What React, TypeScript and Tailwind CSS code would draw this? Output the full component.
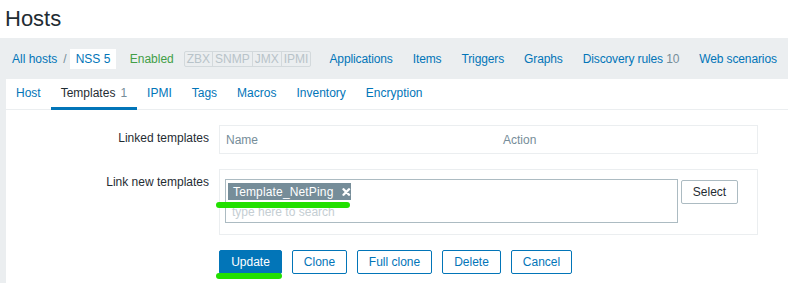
import React from "react";

const navLinks = ["Applications", "Items", "Triggers", "Graphs"];
const tabs = ["Host", "Templates", "IPMI", "Tags", "Macros", "Inventory", "Encryption"];

export default function App() {
  return (
    <div
      className="relative h-[283px] w-[788px] overflow-hidden bg-white text-[12px] leading-[14px] text-[#1f2c33]"
      style={{ fontFamily: '"Liberation Sans", Arial, sans-serif' }}
    >
      {/* title */}
      <header className="flex h-[38px] items-center px-[5px]">
        <h1 className="text-[22px] leading-[24px] font-normal">Hosts</h1>
      </header>

      {/* host navigation */}
      <div className="flex h-[41px] items-center bg-[#ebeef0] pl-[12px] whitespace-nowrap">
        <a className="shrink-0 text-[#0275b8]">All hosts</a>
        <span className="ml-[6px] text-[#768d99]">/</span>
        <span className="ml-[3px] flex h-[20px] w-[46px] shrink-0 items-center bg-white pl-[6px] text-[#0275b8]">NSS 5</span>
        <span className="ml-[14px] text-[#429e47]">Enabled</span>
        <div className="ml-[10px] flex h-[16px] shrink-0 rounded-[2px] border border-[#d3d9dc] text-[#b8c3c9]">
          {["ZBX", "SNMP", "JMX", "IPMI"].map((s, i) => (
            <span
              key={s}
              className={`flex items-center px-[2px] text-[12px] leading-[14px] ${i ? "border-l border-[#d3d9dc]" : ""}`}
            >
              {s}
            </span>
          ))}
        </div>
        <div className="ml-[8px] flex shrink-0 tracking-[-0.12px]">
          {navLinks.map((l) => (
            <a key={l} className="px-[10px] text-[#0275b8]">
              {l}
            </a>
          ))}
          <a className="px-[10px] text-[#0275b8]">
            Discovery rules <span className="text-[#768d99]">10</span>
          </a>
          <a className="px-[10px] text-[#0275b8]">Web scenarios</a>
        </div>
      </div>

      {/* panel */}
      <div className="flex h-[204px]">
        <div className="w-[6px] shrink-0 bg-[#ebeef0]" />
        <div className="flex-1 bg-white">
          <ul className="flex border-b border-[#ebeef0]">
            {tabs.map((t) => (
              <li
                key={t}
                className={`-mb-px flex h-[31px] items-center border-b-[3px] px-[10px] ${
                  t === "Templates" ? "border-[#0275b8] text-[#1f2c33]" : "border-transparent text-[#0275b8]"
                }`}
              >
                {t}
                {t === "Templates" && <span className="ml-[5px] text-[#768d99]">1</span>}
              </li>
            ))}
          </ul>

          <div className="grid grid-cols-[203px_539px] gap-x-[10px] pt-[15px]">
            {/* linked templates */}
            <label className="pt-[6px] text-right">Linked templates</label>
            <div className="grid h-[29px] grid-cols-[283px_1fr] items-center border border-[#ebeef0] text-[#768d99]">
              <span className="pl-[6px]">Name</span>
              <span>Action</span>
            </div>

            {/* link new templates */}
            <label className="mt-[16px] pt-[5px] text-right">Link new templates</label>
            <div className="mt-[15px] flex h-[66px] items-start border border-[#ebeef0] pt-[9px] pl-[5px]">
              <div className="flex h-[44px] w-[453px] flex-col border border-[#acbbc2] px-[2px] pt-[3px]">
                <span className="flex h-[17px] w-[123px] items-center bg-[#768d99] pl-[5px] tracking-[0.15px] text-white">
                  Template_NetPing
                  <svg viewBox="0 0 10 10" className="ml-[9px] h-[10px] w-[10px]">
                    <path d="M1.8 1.8 L8.2 8.2 M8.2 1.8 L1.8 8.2" stroke="white" strokeWidth="2.8" strokeLinecap="round" />
                  </svg>
                </span>
                <span className="mt-[5px] pl-[4px] text-[#c5ced3]">type here to search</span>
              </div>
              <button className="mt-[1px] ml-[3px] h-[24px] w-[57px] rounded-[2px] border border-[#acbbc2] bg-white text-[#1f2c33]">
                Select
              </button>
            </div>

            {/* buttons */}
            <div />
            <div className="mt-[15px] flex gap-[10px]">
              <button className="h-[24px] w-[63px] rounded-[2px] border border-[#0275b8] bg-[#0275b8] text-white">
                Update
              </button>
              {[
                ["Clone", "w-[55px]"],
                ["Full clone", "w-[75px]"],
                ["Delete", "w-[59px]"],
                ["Cancel", "w-[61px]"],
              ].map(([b, w]) => (
                <button key={b} className={`h-[24px] ${w} rounded-[2px] border border-[#0275b8] bg-white text-[#0275b8]`}>
                  {b}
                </button>
              ))}
            </div>
          </div>
        </div>
      </div>

      {/* green highlight marks drawn over the screenshot */}
      <span className="absolute top-[202px] left-[216px] h-[6px] w-[134px] rounded-full bg-[#22e000]" />
      <span className="absolute top-[273px] left-[216px] h-[6px] w-[66px] rounded-full bg-[#22e000]" />
    </div>
  );
}
